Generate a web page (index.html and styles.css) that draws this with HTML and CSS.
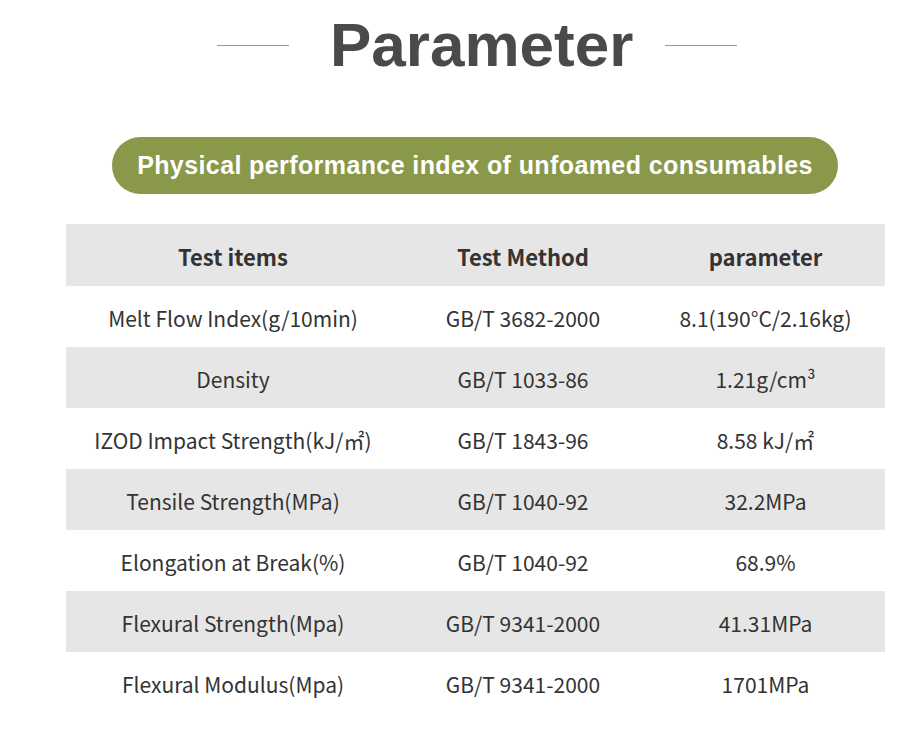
FILE: index.html
```html
<!DOCTYPE html>
<html>
<head>
<meta charset="utf-8">
<link rel="stylesheet" href="styles.css">
</head>
<body>
<div class="page">
  <div class="title-row">
    <span class="rule"></span>
    <h1 class="title">Parameter</h1>
    <span class="rule"></span>
  </div>
  <div class="pill-wrap">
    <div class="pill">Physical performance index of unfoamed consumables</div>
  </div>
  <div class="table">
    <div class="row head">
      <div class="c1">Test items</div><div class="c2">Test Method</div><div class="c3">parameter</div>
    </div>
    <div class="row">
      <div class="c1">Melt Flow Index(g/10min)</div><div class="c2">GB/T 3682-2000</div><div class="c3">8.1(190°C/2.16kg)</div>
    </div>
    <div class="row alt">
      <div class="c1">Density</div><div class="c2">GB/T 1033-86</div><div class="c3">1.21g/cm³</div>
    </div>
    <div class="row">
      <div class="c1">IZOD Impact Strength(kJ/㎡)</div><div class="c2">GB/T 1843-96</div><div class="c3">8.58 kJ/㎡</div>
    </div>
    <div class="row alt">
      <div class="c1">Tensile Strength(MPa)</div><div class="c2">GB/T 1040-92</div><div class="c3">32.2MPa</div>
    </div>
    <div class="row">
      <div class="c1">Elongation at Break(%)</div><div class="c2">GB/T 1040-92</div><div class="c3">68.9%</div>
    </div>
    <div class="row alt">
      <div class="c1">Flexural Strength(Mpa)</div><div class="c2">GB/T 9341-2000</div><div class="c3">41.31MPa</div>
    </div>
    <div class="row">
      <div class="c1">Flexural Modulus(Mpa)</div><div class="c2">GB/T 9341-2000</div><div class="c3">1701MPa</div>
    </div>
  </div>
</div>
</body>
</html>
```

FILE: styles.css
```css
html, body {
  margin: 0;
  padding: 0;
  background: #ffffff;
}
.page {
  width: 912px;
  height: 744px;
  overflow: hidden;
  font-family: "Noto Sans CJK SC", "Noto Sans", sans-serif;
  color: #333333;
}
.title-row {
  display: flex;
  align-items: center;
  height: 90px;
  padding-left: 217px;
}
.rule {
  display: block;
  width: 72px;
  height: 1px;
  background: #9a9a9a;
}
.title {
  margin: 0 32px 0 41px;
  font-family: "Liberation Sans", Arial, sans-serif;
  font-weight: 700;
  font-size: 62px;
  line-height: 90px;
  color: #4a4a4a;
}
.pill-wrap {
  display: flex;
  justify-content: center;
  padding-top: 47px;
  padding-left: 38px;
}
.pill {
  width: 726px;
  height: 57px;
  border-radius: 29px;
  background: #8a984a;
  color: #ffffff;
  font-family: "Liberation Sans", Arial, sans-serif;
  font-weight: 700;
  font-size: 25px;
  letter-spacing: 0.4px;
  display: flex;
  align-items: center;
  justify-content: center;
}
.table {
  margin: 30px 0 0 66px;
  width: 819px;
}
.row {
  display: grid;
  grid-template-columns: 334px 246px 239px;
  height: 61px;
  align-items: center;
  font-size: 21px;
  text-align: center;
  padding-top: 2px;
  box-sizing: border-box;
}
.row.head {
  height: 62px;
  background: #e6e6e6;
  font-weight: 700;
  font-size: 22px;
}
.row.alt {
  background: #e6e6e6;
}
```
